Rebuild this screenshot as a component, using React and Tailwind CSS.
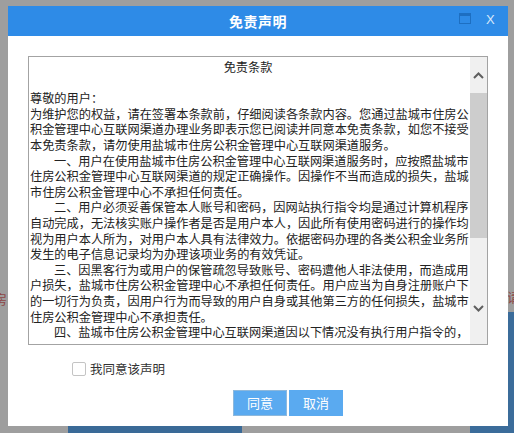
import React from 'react';

const cjk = { fontFamily: '"Noto Sans CJK SC", "Noto Sans", sans-serif' };

const lines = [
  { t: '尊敬的用户：' },
  { t: '为维护您的权益，请在签署本条款前，仔细阅读各条款内容。您通过盐城市住房公' },
  { t: '积金管理中心互联网渠道办理业务即表示您已阅读并同意本免责条款，如您不接受' },
  { t: '本免责条款，请勿使用盐城市住房公积金管理中心互联网渠道服务。' },
  { t: '一、用户在使用盐城市住房公积金管理中心互联网渠道服务时，应按照盐城市', indent: true },
  { t: '住房公积金管理中心互联网渠道的规定正确操作。因操作不当而造成的损失，盐城' },
  { t: '市住房公积金管理中心不承担任何责任。' },
  { t: '二、用户必须妥善保管本人账号和密码，因网站执行指令均是通过计算机程序', indent: true },
  { t: '自动完成，无法核实账户操作者是否是用户本人，因此所有使用密码进行的操作均' },
  { t: '视为用户本人所为，对用户本人具有法律效力。依据密码办理的各类公积金业务所' },
  { t: '发生的电子信息记录均为办理该项业务的有效凭证。' },
  { t: '三、因黑客行为或用户的保管疏忽导致账号、密码遭他人非法使用，而造成用', indent: true },
  { t: '户损失，盐城市住房公积金管理中心不承担任何责任。用户应当为自身注册账户下' },
  { t: '的一切行为负责，因用户行为而导致的用户自身或其他第三方的任何损失，盐城市' },
  { t: '住房公积金管理中心不承担责任。' },
  { t: '四、盐城市住房公积金管理中心互联网渠道因以下情况没有执行用户指令的，', indent: true },
];

const Chevron = ({ up }) => (
  <svg width="11" height="7" viewBox="0 0 11 7" className="block">
    <polyline
      points={up ? '1,6 5.5,1.5 10,6' : '1,1 5.5,5.5 10,1'}
      fill="none"
      stroke="#5f5f5f"
      strokeWidth="2"
    />
  </svg>
);

const Disclaimer = () => (
  <div className="relative w-[460px] h-[289px] border border-[#a3a3a3] bg-white overflow-hidden flex">
    <div className="flex-1 pl-px pt-[3px] text-[12.2px] leading-[15.6px] text-[#222]" style={cjk}>
      <div className="text-center whitespace-nowrap pr-[4px]">免责条款</div>
      <div className="h-[15.6px]" />
      {lines.map((l, i) => (
        <div key={i} className={`whitespace-nowrap ${l.indent ? 'pl-[24px]' : ''}`}>
          {l.t}
        </div>
      ))}
    </div>
    <div className="w-[17px] bg-[#f0f0f0] flex flex-col items-center">
      <div className="h-[36px] flex items-center justify-center">
        <Chevron up />
      </div>
      <div className="w-[17px] h-[145px] bg-[#cdcdcd]" />
      <div className="flex-1" />
      <div className="h-[40px] flex items-start justify-center pt-[1px]">
        <Chevron />
      </div>
    </div>
  </div>
);

const App = () => {
  return (
    <div className="relative w-[514px] h-[433px] bg-[#9e9e9e] overflow-hidden" style={cjk}>
      {/* page behind the overlay */}
      <div className="absolute right-0 top-[312px] w-[20px] h-[121px] bg-[#3b6c9a]" />
      <div className="absolute left-[68px] top-[424px] w-[174px] h-[9px] bg-[#3a6a97]" />
      <div className="absolute left-[470px] top-[424px] w-[44px] h-[9px] bg-[#3b6c9a]" />
      <div className="absolute left-[-6px] top-[289px] text-[13px] text-[#8e4646]">房</div>
      <div className="absolute left-[507px] top-[287px] text-[13px] text-[#8e4646]">请</div>

      <div className="absolute left-[8px] top-[6px] w-[500px] h-[420px] bg-white flex flex-col">
        <div className="relative h-[30px] bg-[#2e8be7] flex items-center justify-center">
          <span className="text-white text-[14px] font-bold tracking-[0.5px]">免责声明</span>
          <div className="absolute left-[451px] top-[7px] w-[12px] h-[11px] border border-[#1d6fc2] border-t-[3px]" />
          <span
            className="absolute left-[478px] top-[6px] text-[13px] leading-[16px] text-[#d6e8fa]"
            style={{ fontFamily: '"Liberation Sans", sans-serif' }}
          >
            X
          </span>
        </div>

        <div className="pl-[20px] pt-[20px]">
          <Disclaimer />
        </div>

        <label className="flex items-center gap-[4px] pl-[64px] pt-[17px]">
          <span className="w-[14px] h-[14px] border border-[#c4c4c4] rounded-[2px] bg-white" />
          <span className="text-[12.5px] leading-[14px] text-[#333]">我同意该声明</span>
        </label>

        <div className="flex gap-[2px] pl-[225px] pt-[14px]">
          <button className="w-[54px] h-[26px] bg-[#5aaaf0] border border-[#8db8dc] text-white text-[13px]">
            同意
          </button>
          <button className="w-[54px] h-[26px] bg-[#5aaaf0] text-white text-[13px]">
            取消
          </button>
        </div>
      </div>
    </div>
  );
};

export default App;
